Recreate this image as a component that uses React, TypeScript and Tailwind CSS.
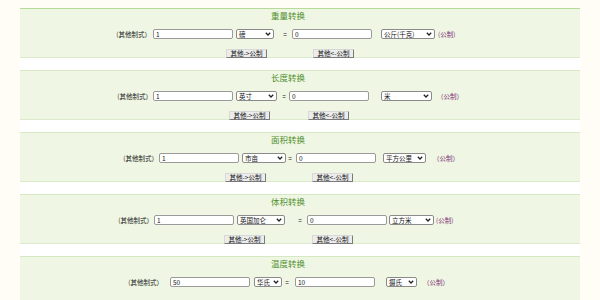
import React from 'react'

type Row = {
  title: string
  from: string
  to: string
  a: string
  b: string
  // spacing / widths tuned per block, written out in full
  rowCls: string
  inCls: string
  selACls: string
  eqCls: string
  in2Cls: string
  selBCls: string
  unitCls: string
  unitText: string
  btnCls: string
  btn2Cls: string
  first?: boolean
  buttons?: boolean
}

const ROWS: Row[] = [
  {
    title: '重量转换', from: '1', to: '0', a: '磅', b: '公斤(千克)',
    rowCls: 'pl-[95px]', inCls: 'ml-[2px]', selACls: 'ml-[3px] w-[38px]', eqCls: 'ml-[7px]',
    in2Cls: 'ml-[3px]', selBCls: 'ml-[9px] w-[54px]', unitCls: 'ml-[3px]', unitText: '(公制)',
    btnCls: 'ml-[206px]', btn2Cls: 'ml-[46px]', first: true, buttons: true,
  },
  {
    title: '长度转换', from: '1', to: '0', a: '英寸', b: '米',
    rowCls: 'pl-[96px]', inCls: 'ml-[1px]', selACls: 'ml-[3px] w-[41px]', eqCls: 'ml-[3px]',
    in2Cls: 'ml-[1px]', selBCls: 'ml-[12px] w-[51px]', unitCls: 'ml-[5px]', unitText: '（公制）',
    btnCls: 'ml-[209px]', btn2Cls: 'ml-[38px]', buttons: true,
  },
  {
    title: '面积转换', from: '1', to: '0', a: '市亩', b: '平方公里',
    rowCls: 'pl-[102px]', inCls: 'ml-[1px]', selACls: 'ml-[3px] w-[44px]', eqCls: 'ml-[0px]',
    in2Cls: 'ml-[2px]', selBCls: 'ml-[7px] w-[43px]', unitCls: 'ml-[7px]', unitText: '（公制）',
    btnCls: 'ml-[205px]', btn2Cls: 'ml-[46px]', buttons: true,
  },
  {
    title: '体积转换', from: '1', to: '0', a: '英国加仑', b: '立方米',
    rowCls: 'pl-[97px]', inCls: 'ml-[1px]', selACls: 'ml-[3px] w-[48px]', eqCls: 'ml-[11px]',
    in2Cls: 'ml-[3px]', selBCls: 'ml-[2px] w-[45px]', unitCls: 'ml-[2px]', unitText: '(公制)',
    btnCls: 'ml-[204px]', btn2Cls: 'ml-[47px]', buttons: true,
  },
  {
    title: '温度转换', from: '50', to: '10', a: '华氏', b: '摄氏',
    rowCls: 'pl-[107px]', inCls: 'ml-[7px]', selACls: 'ml-[4px] w-[28px]', eqCls: 'ml-[1px]',
    in2Cls: 'ml-[4px]', selBCls: 'ml-[11px] w-[31px]', unitCls: 'ml-[6px]', unitText: '（公制）',
    btnCls: 'ml-[206px]', btn2Cls: 'ml-[46px]', buttons: false,
  },
]

function Chevron() {
  return (
    <svg width="6" height="4" viewBox="0 0 6 4" className="shrink-0">
      <polyline points="0.8,0.8 3,3 5.2,0.8" fill="none" stroke="#222" strokeWidth="1.3" />
    </svg>
  )
}

function Field({ value, cls }: { value: string; cls: string }) {
  return (
    <div className={`${cls} h-[10px] w-[80px] border border-[#9a9a9a] rounded-[2px] bg-white pl-[2px] text-[6.5px] leading-[8px] text-[#111]`}>
      {value}
    </div>
  )
}

function Select({ value, cls }: { value: string; cls: string }) {
  return (
    <div className={`${cls} h-[10px] flex items-center justify-between border border-[#8a8a8a] rounded-[2px] bg-white pl-[2px] pr-[2px] text-[6.5px] leading-[8px] text-[#111] whitespace-nowrap overflow-hidden`}>
      <span>{value}</span>
      <Chevron />
    </div>
  )
}

function Btn({ label, cls }: { label: string; cls: string }) {
  return (
    <button className={`${cls} h-[9px] w-[41px] flex items-center justify-center bg-[#ececec] border border-t-[#d8d8d8] border-l-[#d8d8d8] border-r-[#7a7a7a] border-b-[#7a7a7a] rounded-[1px] text-[6.5px] leading-[7px] text-[#111] whitespace-nowrap`}>
      {label}
    </button>
  )
}

function Panel({ r }: { r: Row }) {
  return (
    <div
      className={`h-[50px] mb-[12px] flex flex-col bg-[#eff6e3] border-b border-b-[#dbe9cc] border-t ${
        r.first ? 'border-t-[#b6da98]' : 'border-t-[#d6e8c2]'
      }`}
    >
      <div className="mt-[1px] h-[11px] leading-[11px] text-[8.5px] text-[#4f8f2f] text-center pr-[24px]">
        {r.title}
      </div>
      <div className={`${r.rowCls} mt-[8px] h-[10px] flex items-center`}>
        <div className="w-[36px] text-right text-[6.5px] leading-[10px] text-[#222] whitespace-nowrap">
          (其他制式）
        </div>
        <Field value={r.from} cls={r.inCls} />
        <Select value={r.a} cls={r.selACls} />
        <div className={`${r.eqCls} w-[8px] text-center text-[6.5px] leading-[10px] text-[#222]`}>=</div>
        <Field value={r.to} cls={r.in2Cls} />
        <Select value={r.b} cls={r.selBCls} />
        <div className={`${r.unitCls} text-[6.5px] leading-[10px] text-[#7d2f78] whitespace-nowrap`}>{r.unitText}</div>
      </div>
      {r.buttons && (
        <div className="mt-[10px] flex items-center">
          <Btn label="其他->公制" cls={r.btnCls} />
          <Btn label="其他<-公制" cls={r.btn2Cls} />
        </div>
      )}
    </div>
  )
}

export default function App() {
  return (
    <div
      className="w-[600px] h-[300px] overflow-hidden bg-[#fffdf6]"
      style={{ fontFamily: '"Noto Sans CJK SC", "Noto Sans", sans-serif' }}
    >
      <div className="ml-[20px] mt-[8px] w-[560px] bg-white">
        {ROWS.map((r) => (
          <Panel key={r.title} r={r} />
        ))}
      </div>
    </div>
  )
}
